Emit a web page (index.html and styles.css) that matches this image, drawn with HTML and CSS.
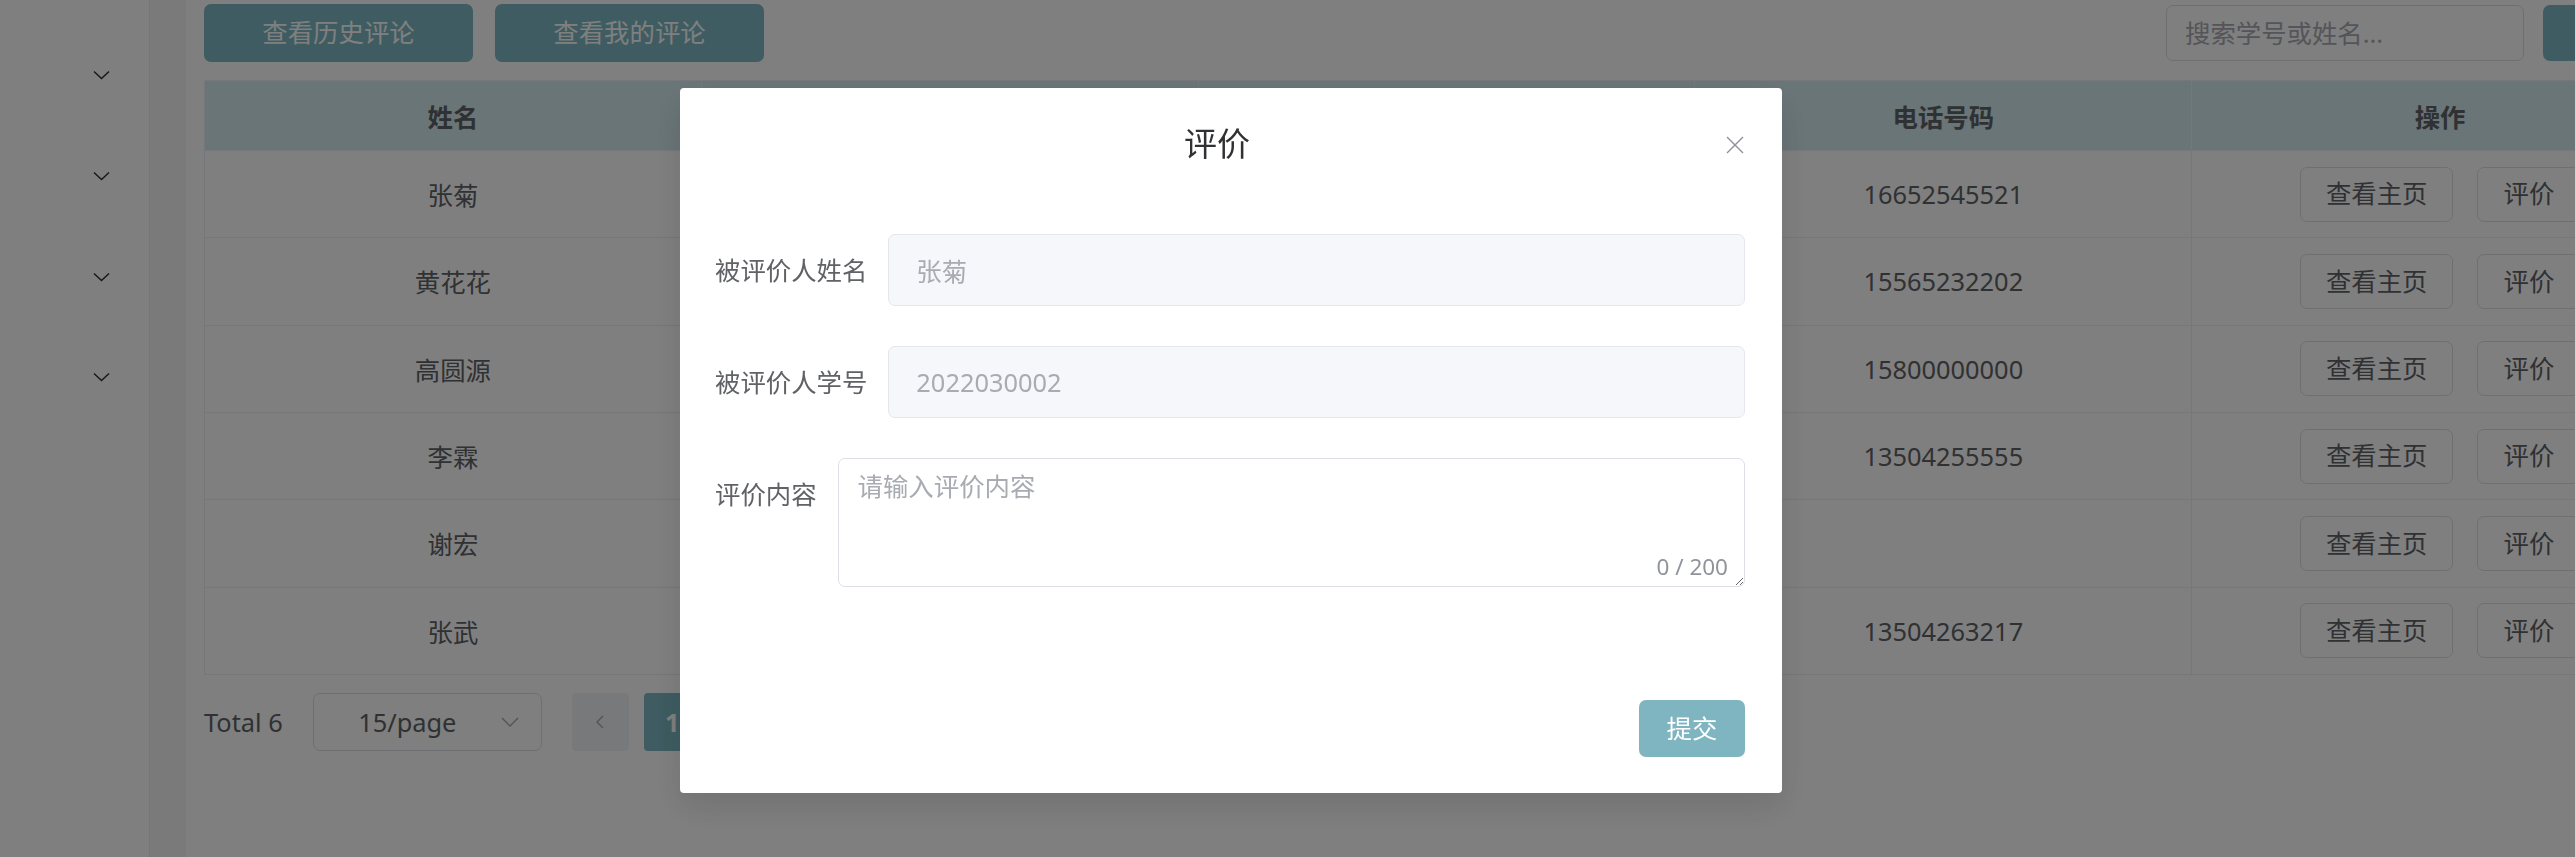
FILE: index.html
```html
<!DOCTYPE html>
<html lang="zh-CN">
<head>
<meta charset="utf-8">
<title>评价</title>
<link rel="stylesheet" href="styles.css">
</head>
<body>
<div class="layout">
  <aside class="sidebar">
    <div class="menu-item"><svg class="arrow" viewBox="0 0 17 10"><polyline points="1,1.5 8.5,8.5 16,1.5"/></svg></div>
    <div class="menu-item"><svg class="arrow" viewBox="0 0 17 10"><polyline points="1,1.5 8.5,8.5 16,1.5"/></svg></div>
    <div class="menu-item"><svg class="arrow" viewBox="0 0 17 10"><polyline points="1,1.5 8.5,8.5 16,1.5"/></svg></div>
    <div class="menu-item"><svg class="arrow" viewBox="0 0 17 10"><polyline points="1,1.5 8.5,8.5 16,1.5"/></svg></div>
  </aside>
  <div class="gutter"></div>
  <main class="main">
    <div class="toolbar">
      <div class="toolbar-left">
        <button class="btn btn-teal btn-wide">查看历史评论</button>
        <button class="btn btn-teal btn-wide">查看我的评论</button>
      </div>
      <div class="toolbar-right">
        <input class="search" type="text" placeholder="搜索学号或姓名...">
        <button class="btn btn-teal btn-search" aria-label="搜索"></button>
      </div>
    </div>

    <table class="table">
      <thead>
        <tr><th>姓名</th><th>学号</th><th>班级</th><th>电话号码</th><th>操作</th></tr>
      </thead>
      <tbody>
        <tr><td>张菊</td><td>2022030002</td><td>计科2201</td><td>16652545521</td><td><div class="ops"><button class="btn btn-plain">查看主页</button><button class="btn btn-plain">评价</button></div></td></tr>
        <tr><td>黄花花</td><td>2022030003</td><td>计科2201</td><td>15565232202</td><td><div class="ops"><button class="btn btn-plain">查看主页</button><button class="btn btn-plain">评价</button></div></td></tr>
        <tr><td>高圆源</td><td>2022030004</td><td>计科2201</td><td>15800000000</td><td><div class="ops"><button class="btn btn-plain">查看主页</button><button class="btn btn-plain">评价</button></div></td></tr>
        <tr><td>李霖</td><td>2022030005</td><td>计科2202</td><td>13504255555</td><td><div class="ops"><button class="btn btn-plain">查看主页</button><button class="btn btn-plain">评价</button></div></td></tr>
        <tr><td>谢宏</td><td>2022030006</td><td>计科2202</td><td></td><td><div class="ops"><button class="btn btn-plain">查看主页</button><button class="btn btn-plain">评价</button></div></td></tr>
        <tr><td>张武</td><td>2022030007</td><td>计科2202</td><td>13504263217</td><td><div class="ops"><button class="btn btn-plain">查看主页</button><button class="btn btn-plain">评价</button></div></td></tr>
      </tbody>
    </table>

    <div class="pagination">
      <span class="total">Total 6</span>
      <div class="sizes">
        <span class="sizes-text">15/page</span>
        <svg class="sizes-arrow" viewBox="0 0 18 10"><polyline points="1,1 9,9 17,1"/></svg>
      </div>
      <button class="pager-btn"><svg class="pager-arrow" viewBox="0 0 8 14"><polyline points="7,1 1,7 7,13"/></svg></button>
      <span class="pager-num active">1</span>
      <button class="pager-btn"><svg class="pager-arrow" viewBox="0 0 8 14"><polyline points="1,1 7,7 1,13"/></svg></button>
    </div>
  </main>
</div>

<div class="overlay">
  <div class="dialog">
    <div class="dialog-header">
      <span class="dialog-title">评价</span>
    </div>
    <button class="dialog-close" aria-label="关闭"><svg viewBox="0 0 18 18"><line x1="1" y1="1" x2="17" y2="17"/><line x1="17" y1="1" x2="1" y2="17"/></svg></button>
    <div class="dialog-body">
      <div class="form-item">
        <label class="form-label">被评价人姓名</label>
        <div class="form-control"><input class="input" type="text" value="张菊" disabled></div>
      </div>
      <div class="form-item">
        <label class="form-label">被评价人学号</label>
        <div class="form-control"><input class="input" type="text" value="2022030002" disabled></div>
      </div>
      <div class="form-item">
        <label class="form-label">评价内容</label>
        <div class="form-control textarea-wrap">
          <textarea class="textarea" placeholder="请输入评价内容" maxlength="200"></textarea>
          <span class="count">0 / 200</span>
        </div>
      </div>
    </div>
    <div class="dialog-footer">
      <button class="btn btn-submit">提交</button>
    </div>
  </div>
</div>
</body>
</html>
```

FILE: styles.css
```css
* {
  box-sizing: border-box;
}

html,
body {
  margin: 0;
  height: 100%;
  overflow: hidden;
}

body {
  font-family: "Noto Sans", "Noto Sans CJK SC", sans-serif;
  font-size: 25.4px;
  color: #606266;
  background: #ffffff;
}

.layout {
  display: flex;
  height: 857px;
  width: max-content;
}

/* sidebar */
.sidebar {
  flex: none;
  width: 150px;
  border-right: 1px solid #ececec;
  padding-top: 25px;
  background: #ffffff;
}

.menu-item {
  height: 100.67px;
  display: flex;
  align-items: center;
  justify-content: flex-end;
  padding-right: 39px;
}

.arrow {
  width: 17px;
  height: 10px;
  fill: none;
  stroke: #303133;
  stroke-width: 1.5;
}

.gutter {
  flex: none;
  width: 36px;
  background: #f5f5f5;
}

/* main */
.main {
  flex: none;
  width: 2503px;
  padding: 4px 0 0 18px;
}

.toolbar {
  display: flex;
  justify-content: space-between;
  align-items: center;
  width: 2485px;
  height: 58px;
}

.toolbar-left {
  display: flex;
  gap: 22px;
}

.toolbar-right {
  display: flex;
  align-items: center;
  gap: 19px;
}

.btn {
  font: inherit;
  border: none;
  border-radius: 7px;
  cursor: pointer;
  padding: 0;
  line-height: 1;
}

.btn-teal {
  background: #7cb9c2;
  color: #ffffff;
}

.btn-wide {
  width: 269px;
  height: 58px;
}

.search {
  width: 358px;
  height: 56px;
  border: 1px solid #dcdfe6;
  border-radius: 7px;
  padding: 0 18px;
  font: inherit;
  color: #606266;
  outline: none;
}

.search::placeholder {
  color: #a8abb2;
}

.btn-search {
  width: 146px;
  height: 56px;
}

/* table */
.table {
  margin-top: 18px;
  width: 2485px;
  table-layout: fixed;
  border-collapse: collapse;
  border: 1px solid #ebeef5;
}

.table th,
.table td {
  border: 1px solid #ebeef5;
  text-align: center;
  padding: 0;
}

.table th {
  height: 70px;
  background: #d4eaee;
  color: #606266;
  font-weight: 700;
}

.table td {
  height: 87.33px;
  color: #606266;
}

.ops {
  display: flex;
  justify-content: center;
  gap: 24px;
}

.btn-plain {
  height: 55px;
  padding: 0 25px;
  border: 1px solid #dcdfe6;
  background: #ffffff;
  color: #606266;
}

/* pagination */
.pagination {
  display: flex;
  align-items: center;
  height: 58px;
  margin-top: 18px;
}

.total {
  margin-right: 30px;
  color: #606266;
}

.sizes {
  width: 229px;
  height: 58px;
  border: 1px solid #dcdfe6;
  border-radius: 7px;
  display: flex;
  align-items: center;
  padding-right: 22px;
  margin-right: 30px;
}

.sizes-text {
  flex: 1;
  text-align: center;
  color: #606266;
}

.sizes-arrow {
  width: 18px;
  height: 10px;
  fill: none;
  stroke: #a8abb2;
  stroke-width: 1.5;
}

.pager-btn {
  width: 57px;
  height: 58px;
  border: none;
  border-radius: 4px;
  background: #f0f2f5;
  display: flex;
  align-items: center;
  justify-content: center;
  padding: 0;
}

.pager-arrow {
  width: 8px;
  height: 14px;
  fill: none;
  stroke: #a8abb2;
  stroke-width: 1.5;
}

.pager-num {
  width: 57px;
  height: 58px;
  margin: 0 15px;
  border-radius: 4px;
  display: flex;
  align-items: center;
  justify-content: center;
  font-weight: 700;
}

.pager-num.active {
  background: #7cb9c2;
  color: #ffffff;
}

/* dialog */
.overlay {
  position: fixed;
  inset: 0;
  background: rgba(0, 0, 0, 0.5);
}

.dialog {
  position: absolute;
  left: 680px;
  top: 88px;
  width: 1102px;
  background: #ffffff;
  border-radius: 4px;
  box-shadow: 0 14px 36px 7px rgba(0, 0, 0, 0.04), 0 14px 35px rgba(0, 0, 0, 0.08);
}

.dialog-header {
  padding: 35px 35px 17px;
  margin-right: 28px;
  text-align: center;
}

.dialog-title {
  display: block;
  font-size: 33px;
  line-height: 42px;
  color: #303133;
}

.dialog-close {
  position: absolute;
  top: 10px;
  right: 0;
  width: 94px;
  height: 94px;
  border: none;
  background: transparent;
  display: flex;
  align-items: center;
  justify-content: center;
  padding: 0;
}

.dialog-close svg {
  width: 18px;
  height: 18px;
  stroke: #909399;
  stroke-width: 1.4;
}

.dialog-body {
  padding: 52px 37px 52px 35px;
}

.form-item {
  display: flex;
  margin-bottom: 40px;
}

.form-label {
  flex: none;
  line-height: 72px;
  padding-right: 21px;
  color: #606266;
  white-space: nowrap;
}

.form-control {
  flex: 1;
}

.input {
  display: block;
  width: 100%;
  height: 72px;
  border: 1px solid #e4e7ed;
  border-radius: 7px;
  background: #f5f7fa;
  padding: 0 27px;
  font: inherit;
  color: #a8abb2;
  -webkit-text-fill-color: #a8abb2;
  opacity: 1;
}

.textarea-wrap {
  position: relative;
}

.textarea {
  display: block;
  width: 100%;
  height: 129px;
  border: 1px solid #dcdfe6;
  border-radius: 7px;
  padding: 9px 19px;
  font: inherit;
  line-height: 37px;
  color: #606266;
  resize: vertical;
  outline: none;
}

.textarea::placeholder {
  color: #a8abb2;
}

.count {
  position: absolute;
  right: 17px;
  bottom: 8px;
  font-size: 22.5px;
  line-height: 24px;
  color: #909399;
  background: #ffffff;
}

.dialog-footer {
  padding: 21px 37px 36px;
  display: flex;
  justify-content: flex-end;
}

.btn-submit {
  width: 106px;
  height: 57px;
  background: #7fb5c1;
  color: #ffffff;
}
```
